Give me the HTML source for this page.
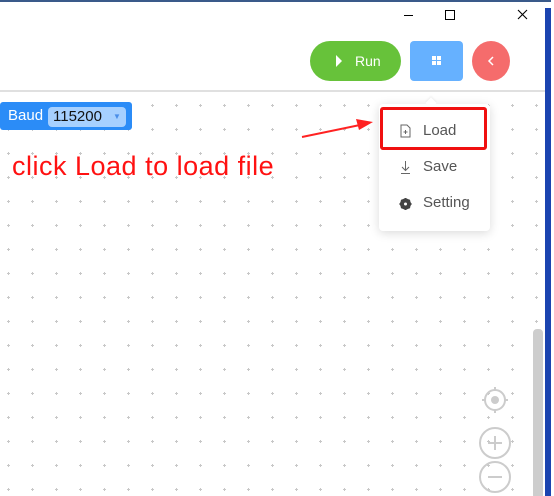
<!DOCTYPE html>
<html><head><meta charset="utf-8"><style>
body{margin:0;width:554px;height:496px;overflow:hidden;background:#fff;font-family:"Liberation Sans","Noto Sans CJK SC",sans-serif;position:relative}
.abs{position:absolute}
</style></head><body>
<div class="abs" style="left:0;top:0;width:554px;height:2px;background:#3a5a8a"></div>
<svg class="abs" style="left:0;top:0" width="554" height="496">
<defs><pattern id="g" x="6" y="7" width="24" height="24" patternUnits="userSpaceOnUse">
<rect x="1" y="2" width="3" height="1" fill="#c8c8c8"/><rect x="2" y="1" width="1" height="3" fill="#c8c8c8"/></pattern></defs>
<rect x="0" y="93" width="544" height="403" fill="url(#g)"/>
<rect x="0" y="90" width="545" height="2" fill="#e0e0e0"/>
<path d="M404 15.5h9" stroke="#000" stroke-width="1"/>
<rect x="445.5" y="10.5" width="9" height="9" fill="none" stroke="#000"/>
<path d="M518 10l9 9M527 10l-9 9" stroke="#000" stroke-width="1.1"/>
<rect x="545" y="8" width="6" height="488" fill="#1b44b0"/>
<rect x="551" y="0" width="3" height="496" fill="#fff"/>
<rect x="533" y="329" width="10" height="170" rx="4" fill="#cdcdcd"/>
<circle cx="495" cy="400" r="10" fill="none" stroke="#ccc" stroke-width="2"/><circle cx="495" cy="400" r="4" fill="#ccc"/>
<path d="M495 387v4M495 409v4M482 400h4M504 400h4" stroke="#ccc" stroke-width="2"/>
<circle cx="495" cy="443" r="15" fill="none" stroke="#ccc" stroke-width="2"/><path d="M488 443h14M495 436v14" stroke="#ccc" stroke-width="2"/>
<circle cx="495" cy="477" r="15" fill="none" stroke="#ccc" stroke-width="2"/><path d="M488 477h14" stroke="#ccc" stroke-width="2"/>
<path d="M302 137L360 125" stroke="#f22" stroke-width="2"/><path d="M373 122L356 119L359 130Z" fill="#f22"/>
</svg>
<div class="abs" style="left:310px;top:41px;width:91px;height:40px;border-radius:20px;background:#67c23a;color:#fff;font-size:14px;line-height:40px"><span style="position:absolute;left:26px;top:14px;width:0;height:0;border-left:6px solid #fff;border-top:6px solid transparent;border-bottom:6px solid transparent"></span><span style="position:absolute;left:45px">Run</span></div>
<div class="abs" style="left:410px;top:41px;width:53px;height:40px;border-radius:4px;background:#66b1ff">
<div class="abs" style="left:22px;top:15px;width:4px;height:4px;background:#fff"></div><div class="abs" style="left:27px;top:15px;width:4px;height:4px;background:#fff"></div><div class="abs" style="left:22px;top:20px;width:4px;height:4px;background:#fff"></div><div class="abs" style="left:27px;top:20px;width:4px;height:4px;background:#fff"></div></div>
<div class="abs" style="left:472px;top:41px;width:38px;height:40px;border-radius:50%;background:#f56c6c"><svg width="38" height="40"><path d="M21 16l-4 4 4 4" fill="none" stroke="#fff" stroke-width="1.5"/></svg></div>
<div class="abs" style="left:0;top:102px;width:132px;height:28px;background:#2b8cf7;border-radius:3px"></div>
<div class="abs" style="left:8px;top:102px;color:#fff;font-size:15px;line-height:28px">Baud</div>
<div class="abs" style="left:48px;top:107px;width:78px;height:20px;background:#a6d0ff;border-radius:4px;font-size:15px;line-height:20px;color:#111"><span style="margin-left:5px">115200</span><span style="position:absolute;left:65px;top:0;font-size:8px;color:#4a8ee8">▼</span></div>
<div class="abs" style="left:12px;top:149px;color:#f11;font-size:27px;letter-spacing:0.5px;line-height:34px">click Load to load file</div>
<div class="abs" style="left:379px;top:104px;width:111px;height:127px;background:#fff;border-radius:4px;box-shadow:0 2px 10px rgba(0,0,0,.15)"></div>
<div class="abs" style="left:427px;top:99px;width:8px;height:8px;background:#fff;transform:rotate(45deg);box-shadow:-1px -1px 2px rgba(0,0,0,.06)"></div>
<div class="abs" style="left:380px;top:107px;width:101px;height:37px;border:3px solid #f01010;border-radius:3px"></div>
<div class="abs" style="left:423px;top:121px;font-size:15px;color:#555;line-height:20px">Load</div>
<div class="abs" style="left:423px;top:157px;font-size:15px;color:#555;line-height:20px">Save</div>
<div class="abs" style="left:423px;top:193px;font-size:15px;color:#555;line-height:20px">Setting</div>
<svg class="abs" style="left:395px;top:120px" width="20" height="100">
<path d="M6 5h6l3 3v9H6z" fill="none" stroke="#666"/><path d="M8.5 12h4M10.5 10v4" stroke="#666"/>
<path d="M10.5 41v9M7 47l3.5 3.5 3.5-3.5M6 53.5h9" fill="none" stroke="#666"/>
<circle cx="10.5" cy="84" r="4" fill="none" stroke="#444" stroke-width="3"/><path d="M10.5 78v12M4.5 84h12M6.3 79.8l8.4 8.4M14.7 79.8l-8.4 8.4" stroke="#444" stroke-width="2"/><circle cx="10.5" cy="84" r="1.5" fill="#fff"/>
</svg>
</body></html>
